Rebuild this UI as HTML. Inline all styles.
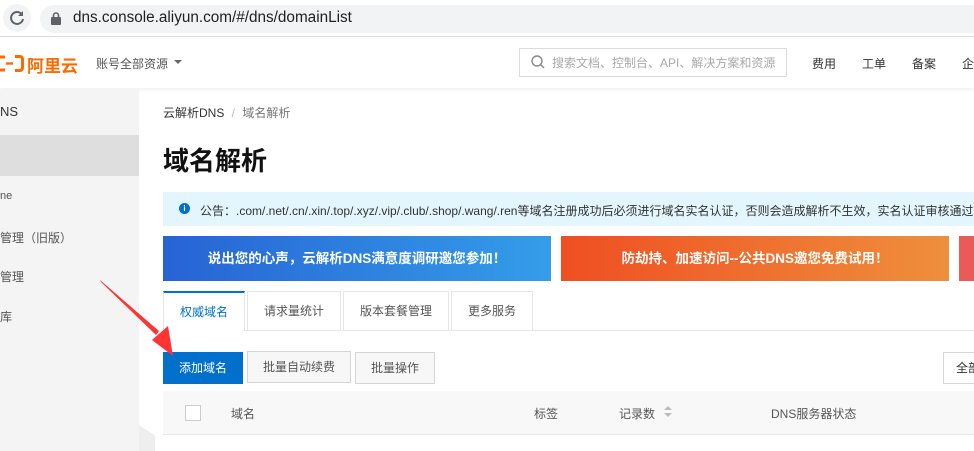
<!DOCTYPE html>
<html><head><meta charset="utf-8"><style>
*{margin:0;padding:0;box-sizing:border-box}
body{width:974px;height:451px;overflow:hidden;background:#fff;font-family:"Liberation Sans","Noto Sans CJK SC",sans-serif;position:relative;color:#333}
.a{position:absolute;white-space:nowrap}
</style></head><body>
<!-- browser bar -->
<div class="a" style="left:0;top:0;width:974px;height:37px;background:#fff;border-bottom:1px solid #dadce0"></div>
<div class="a" style="left:3px;top:4px;width:28px;height:28px;border-radius:50%;background:#f1f3f4"></div>
<svg class="a" style="left:8px;top:9px" width="18" height="18" viewBox="0 0 18 18"><path d="M14 5.5A6 6 0 1 0 15 10" fill="none" stroke="#5f6368" stroke-width="2"/><path d="M15 2v5h-5z" fill="#5f6368"/></svg>
<div class="a" style="left:40px;top:5px;width:960px;height:28px;border-radius:14px;background:#f1f3f4"></div>
<svg class="a" style="left:51px;top:12px" width="10" height="13" viewBox="0 0 10 13"><rect x="0" y="5" width="10" height="8" rx="1" fill="#5f6368"/><path d="M2.5 5V3.5a2.5 2.5 0 0 1 5 0V5" fill="none" stroke="#5f6368" stroke-width="1.6"/></svg>
<div class="a" style="left:73px;top:9px;font-size:15.3px;color:#202124">dns.console.aliyun.com/#/dns/domainList</div>
<!-- header -->
<div class="a" style="left:0;top:38px;width:974px;height:50px;background:#fff;box-shadow:0 2px 4px rgba(0,0,0,.06)"></div>
<svg class="a" style="left:0;top:55px" width="26" height="17" viewBox="0 0 26 17"><path d="M0 2h5M0 15h5" stroke="#ff6a00" stroke-width="3"/><path d="M6 8.5h7" stroke="#ff6a00" stroke-width="2.4"/><path d="M15 1.5h5a2.5 2.5 0 0 1 2.5 2.5v9a2.5 2.5 0 0 1-2.5 2.5h-5" fill="none" stroke="#ff6a00" stroke-width="3"/></svg>
<div class="a" style="left:27px;top:52px;font-size:17px;font-weight:bold;color:#ff6a00">阿里云</div>
<div class="a" style="left:96px;top:55px;font-size:12px;color:#555">账号全部资源</div>
<div class="a" style="left:174px;top:60px;border:4px solid transparent;border-top-color:#666"></div>
<div class="a" style="left:519px;top:48px;width:268px;height:29px;border:1px solid #dcdcdc"></div>
<svg class="a" style="left:531px;top:55px" width="14" height="14" viewBox="0 0 14 14"><circle cx="6" cy="6" r="5" fill="none" stroke="#888" stroke-width="1.4"/><path d="M9.5 9.5l3.5 3.5" stroke="#888" stroke-width="1.4"/></svg>
<div class="a" style="left:552px;top:54px;font-size:12px;color:#aaa">搜索文档、控制台、API、解决方案和资源</div>
<div class="a" style="left:812px;top:55px;font-size:12px;color:#333">费用</div>
<div class="a" style="left:862px;top:55px;font-size:12px;color:#333">工单</div>
<div class="a" style="left:912px;top:55px;font-size:12px;color:#333">备案</div>
<div class="a" style="left:962px;top:55px;font-size:12px;color:#333">企</div>
<!-- sidebar -->
<div class="a" style="left:0;top:89px;width:139px;height:362px;background:#f4f4f4"></div>
<div class="a" style="left:139px;top:425px;width:16px;height:26px;background:#eee;clip-path:polygon(0 0,100% 40%,100% 100%,0 100%)"></div>
<div class="a" style="left:0;top:135px;width:139px;height:41px;background:#dedede"></div>
<div class="a" style="left:0;top:104px;font-size:13px;color:#333">NS</div>
<div class="a" style="left:0;top:190px;font-size:11px;color:#555">ne</div>
<div class="a" style="left:0;top:229px;font-size:12px;color:#555">管理（旧版）</div>
<div class="a" style="left:0;top:268px;font-size:12px;color:#555">管理</div>
<div class="a" style="left:0;top:308px;font-size:12px;color:#555">库</div>
<!-- content -->
<div class="a" style="left:163px;top:104px;font-size:12px;color:#333">云解析DNS <span style="color:#bbb;margin:0 4px">/</span> <span style="color:#777">域名解析</span></div>
<div class="a" style="left:163px;top:141px;font-size:26px;font-weight:bold;color:#111">域名解析</div>
<div class="a" style="left:163px;top:192px;width:811px;height:34px;background:#e3f5fd"></div>
<div class="a" style="left:179px;top:203px;width:11px;height:11px;border-radius:50%;background:#0070cc;color:#fff;font-size:8px;line-height:11px;text-align:center;font-weight:bold">i</div>
<div class="a" style="left:200px;top:202px;font-size:12px;color:#333">公告：.com/.net/.cn/.xin/.top/.xyz/.vip/.club/.shop/.wang/.ren等域名注册成功后必须进行域名实名认证，否则会造成解析不生效，实名认证审核通过</div>
<div class="a" style="left:163px;top:236px;width:388px;height:45px;background:linear-gradient(90deg,#2763d4,#349de9);color:#fff;font-weight:bold;font-size:13.5px;line-height:45px;text-align:center">说出您的心声，云解析DNS满意度调研邀您参加！</div>
<div class="a" style="left:561px;top:236px;width:388px;height:45px;background:linear-gradient(90deg,#ef4f22,#ef8f3c);color:#fff;font-weight:bold;font-size:13.5px;line-height:45px;text-align:center">防劫持、加速访问--公共DNS邀您免费试用！</div>
<div class="a" style="left:959px;top:236px;width:15px;height:45px;background:#ea5a56"></div>
<!-- tabs -->
<div class="a" style="left:163px;top:330px;width:811px;height:1px;background:#e3e6ea"></div>
<div class="a" style="left:163px;top:291px;width:82px;height:40px;background:#fff;border-top:2px solid #0070cc;border-left:1px solid #e3e6ea;border-right:1px solid #e3e6ea;color:#0070cc;font-size:12px;text-align:center;line-height:38px">权威域名</div>
<div class="a" style="left:247px;top:291px;width:94px;height:40px;border:1px solid #e3e6ea;font-size:12px;text-align:center;line-height:38px;color:#555">请求量统计</div>
<div class="a" style="left:343px;top:291px;width:106px;height:40px;border:1px solid #e3e6ea;font-size:12px;text-align:center;line-height:38px;color:#555">版本套餐管理</div>
<div class="a" style="left:451px;top:291px;width:82px;height:40px;border:1px solid #e3e6ea;font-size:12px;text-align:center;line-height:38px;color:#555">更多服务</div>
<!-- buttons -->
<div class="a" style="left:163px;top:352px;width:80px;height:32px;background:#0070cc;color:#fff;font-size:12px;text-align:center;line-height:32px">添加域名</div>
<div class="a" style="left:247px;top:351px;width:104px;height:32px;border:1px solid #d5d5d5;background:#f7f7f7;font-size:12px;text-align:center;line-height:30px;color:#555">批量自动续费</div>
<div class="a" style="left:355px;top:352px;width:80px;height:32px;border:1px solid #d5d5d5;background:#f7f7f7;font-size:12px;text-align:center;line-height:30px;color:#555">批量操作</div>
<div class="a" style="left:943px;top:352px;width:40px;height:32px;border:1px solid #d5d5d5;background:#fff;font-size:12px;line-height:30px;padding-left:12px;color:#333">全部</div>
<!-- table header -->
<div class="a" style="left:163px;top:391px;width:811px;height:44px;background:#f8f8f8;border-bottom:1px solid #e5e8ec"></div>
<div class="a" style="left:185px;top:405px;width:16px;height:16px;border:1px solid #ccc;background:#fff"></div>
<div class="a" style="left:231px;top:405px;font-size:12px;color:#555">域名</div>
<div class="a" style="left:534px;top:405px;font-size:12px;color:#555">标签</div>
<div class="a" style="left:619px;top:405px;font-size:12px;color:#555">记录数</div>
<div class="a" style="left:664px;top:406px;border:4px solid transparent;border-bottom-color:#bbb;border-top-width:0"></div>
<div class="a" style="left:664px;top:413px;border:4px solid transparent;border-top-color:#bbb;border-bottom-width:0"></div>
<div class="a" style="left:771px;top:405px;font-size:12px;color:#555">DNS服务器状态</div>
<!-- arrow -->
<svg class="a" style="left:0;top:0" width="974" height="451" viewBox="0 0 974 451"><path d="M100 280L101 282L156 335L159 331Z" fill="#f33"/><path d="M173 356L152 340L168 326Z" fill="#f33"/></svg>
</body></html>
